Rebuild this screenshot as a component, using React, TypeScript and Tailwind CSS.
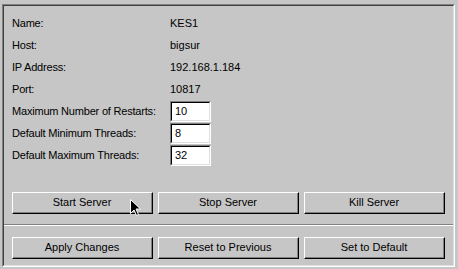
import React from 'react';

const rows: { label: string; value: string; input?: boolean }[] = [
    { label: 'Name:', value: 'KES1' },
    { label: 'Host:', value: 'bigsur' },
    { label: 'IP Address:', value: '192.168.1.184' },
    { label: 'Port:', value: '10817' },
    { label: 'Maximum Number of Restarts:', value: '10', input: true },
    { label: 'Default Minimum Threads:', value: '8', input: true },
    { label: 'Default Maximum Threads:', value: '32', input: true },
];

// classic raised button: white top/left, black + gray bottom/right
const Button: React.FC<{ label: string; cursor?: boolean }> = ({ label, cursor }) => (
    <div className="relative flex-1 border-t border-l border-white border-r border-b border-r-black border-b-black">
        <div className="h-[20px] flex items-center justify-center border-r border-b border-[#808080]">
            {label}
        </div>
        {cursor && (
            <svg className="absolute left-[117px] top-[6px]" width="12" height="18" viewBox="0 0 12 18">
                <path d="M0.5 0.5 L0.5 14.5 L4 11 L6.5 16.5 L8.5 15.5 L6 10 L10.5 10 Z" fill="black" stroke="white" strokeWidth="1" />
            </svg>
        )}
    </div>
);

const App: React.FC = () => {
    return (
        <div
            className="w-[458px] h-[269px] bg-[#c6c6c6] pl-[2px] pt-[4px] pr-[3px] pb-[2px] text-[11px] text-black"
            style={{ fontFamily: '"Liberation Sans", Arial, sans-serif' }}
        >
            <div className="h-full border-t border-l border-[#808080] border-r border-b border-r-white border-b-white">
                <div className="h-full border-t border-l border-[#404040] border-r border-b border-r-[#dfdfdf] border-b-[#dfdfdf] flex flex-col">
                    {/* properties */}
                    <div className="pt-[6px] pl-[8px]">
                        {rows.map((r) => (
                            <div key={r.label} className="h-[22px] flex items-center whitespace-nowrap">
                                <div className="w-[158px] tracking-[-0.2px]">{r.label}</div>
                                {r.input ? (
                                    <div className="w-[41px] h-[21px] border-t border-l border-[#808080] border-r border-b border-r-white border-b-white">
                                        <div className="h-full bg-white border-t border-l border-black border-r border-b border-r-[#dfdfdf] border-b-[#dfdfdf] pl-[3px] flex items-center">
                                            {r.value}
                                        </div>
                                    </div>
                                ) : (
                                    <div>{r.value}</div>
                                )}
                            </div>
                        ))}
                    </div>

                    {/* server controls */}
                    <div className="mt-[26px] px-[8px] flex gap-[5px]">
                        <Button label="Start Server" cursor />
                        <Button label="Stop Server" />
                        <Button label="Kill Server" />
                    </div>

                    <div className="mt-[10px] border-t border-[#808080] border-b border-b-white" />

                    {/* settings */}
                    <div className="mt-[11px] px-[8px] flex gap-[5px]">
                        <Button label="Apply Changes" />
                        <Button label="Reset to Previous" />
                        <Button label="Set to Default" />
                    </div>
                </div>
            </div>
        </div>
    );
};

export default App;
